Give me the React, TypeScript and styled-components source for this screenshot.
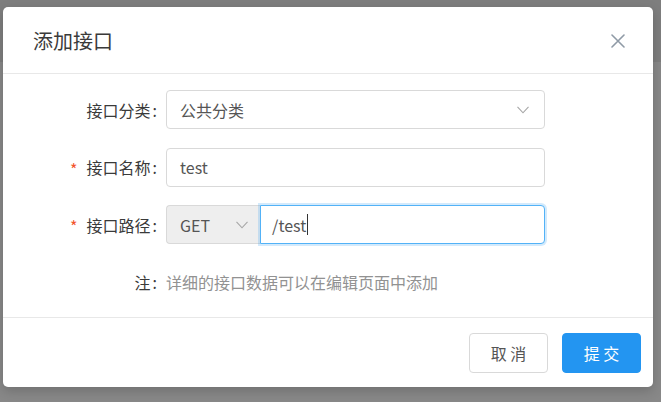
import React from 'react'
import styled, { createGlobalStyle } from 'styled-components'

const GlobalStyle = createGlobalStyle`
  html, body {
    margin: 0;
    padding: 0;
  }
  body {
    font-family: 'Noto Sans CJK SC', 'Noto Sans', sans-serif;
  }
`

const Backdrop = styled.div`
  width: 661px;
  height: 402px;
  box-sizing: border-box;
  padding: 7px 8px 0 3px;
  background: linear-gradient(to bottom, #7e7e7e 0, #7e7e7e 62px, #888888 62px);
  overflow: hidden;
`

const Modal = styled.div`
  width: 650px;
  height: 380px;
  background: #fff;
  border-radius: 5px;
  box-shadow: 0 4px 12px rgba(0, 0, 0, 0.18);
  display: flex;
  flex-direction: column;
`

const Header = styled.div`
  height: 66px;
  flex: none;
  display: flex;
  align-items: center;
  justify-content: space-between;
  padding: 0 28px 0 30px;
  border-bottom: 1px solid #e8e8e8;
`

const Title = styled.div`
  font-size: 20px;
  color: #3a3a3a;
  line-height: 1;
  padding-top: 2px;
`

const CloseButton = styled.div`
  width: 14px;
  height: 14px;
  display: flex;
  align-items: center;
  justify-content: center;
  margin-top: 2px;
`

const Body = styled.div`
  flex: 1;
  display: flex;
  flex-direction: column;
  gap: 18.5px;
  padding-top: 16px;
`

const FormRow = styled.div`
  display: grid;
  grid-template-columns: 163px 379px;
  height: 39px;
  align-items: center;
`

const Label = styled.label`
  display: flex;
  justify-content: flex-end;
  align-items: center;
  font-size: 16px;
  color: #3a3a3a;
  &::after {
    content: ':';
    margin: 0 9px 0 2px;
  }
`

const Required = styled.span`
  color: #f2532c;
  font-size: 16px;
  line-height: 1;
  margin-right: 9px;
  padding-top: 3px;
`

const Field = styled.div<{ $focused?: boolean; $addon?: boolean }>`
  box-sizing: border-box;
  height: 39px;
  display: flex;
  align-items: center;
  justify-content: space-between;
  padding: 0 15px 0 13px;
  border: 1px solid ${p => (p.$focused ? '#52b2f7' : '#d9d9d9')};
  border-radius: 4px;
  background: ${p => (p.$addon ? '#eeeeee' : '#fff')};
  box-shadow: ${p => (p.$focused ? '0 0 0 2px rgba(35, 149, 241, 0.2)' : 'none')};
  font-size: 16px;
  color: #555;
`

const InputGroup = styled.div`
  display: flex;
  height: 39px;
`

const MethodSelect = styled(Field)`
  width: 94px;
  flex: none;
  border-radius: 4px 0 0 4px;
  border-right: none;
  padding: 0 12px 0 13px;
`

const PathInput = styled(Field)`
  flex: 1;
  border-radius: 0 4px 4px 0;
  justify-content: flex-start;
  padding-left: 11px;
`

const Caret = styled.span`
  display: inline-block;
  width: 1px;
  height: 21px;
  background: #333;
  margin-left: 1px;
`

const Note = styled.span`
  font-size: 16px;
  color: #929292;
`

const Footer = styled.div`
  flex: none;
  height: 70px;
  box-sizing: border-box;
  display: flex;
  justify-content: flex-end;
  align-items: flex-start;
  gap: 14px;
  padding: 15px 12px 0 0;
  border-top: 1px solid #e8e8e8;
`

const Button = styled.button<{ $primary?: boolean }>`
  width: 79px;
  height: 40px;
  border-radius: 4px;
  font-family: 'Noto Sans CJK SC', sans-serif;
  font-size: 16px;
  cursor: pointer;
  border: 1px solid ${p => (p.$primary ? '#2395f1' : '#d9d9d9')};
  background: ${p => (p.$primary ? '#2395f1' : '#fff')};
  color: ${p => (p.$primary ? '#fff' : '#555')};
`

const Chevron = () => (
  <svg width='12' height='8' viewBox='0 0 12 8'>
    <path d='M0.5 0.8 L6 6.8 L11.5 0.8' fill='none' stroke='#a6a6a6' strokeWidth='1.1' />
  </svg>
)

const CloseIcon = () => (
  <svg width='14' height='14' viewBox='0 0 14 14'>
    <path d='M1 1 L13 13 M13 1 L1 13' stroke='#8f9aa6' strokeWidth='1.6' strokeLinecap='round' />
  </svg>
)

export default function App() {
  return (
    <>
      <GlobalStyle />
      <Backdrop>
        <Modal>
          <Header>
            <Title>添加接口</Title>
            <CloseButton>
              <CloseIcon />
            </CloseButton>
          </Header>
          <Body>
            <FormRow>
              <Label>接口分类</Label>
              <Field>
                <span>公共分类</span>
                <Chevron />
              </Field>
            </FormRow>
            <FormRow>
              <Label>
                <Required>*</Required>接口名称
              </Label>
              <Field>
                <span>test</span>
              </Field>
            </FormRow>
            <FormRow>
              <Label>
                <Required>*</Required>接口路径
              </Label>
              <InputGroup>
                <MethodSelect $addon>
                  <span>GET</span>
                  <Chevron />
                </MethodSelect>
                <PathInput $focused>
                  <span>/test</span>
                  <Caret />
                </PathInput>
              </InputGroup>
            </FormRow>
            <FormRow>
              <Label>注</Label>
              <Note>详细的接口数据可以在编辑页面中添加</Note>
            </FormRow>
          </Body>
          <Footer>
            <Button>取 消</Button>
            <Button $primary>提 交</Button>
          </Footer>
        </Modal>
      </Backdrop>
    </>
  )
}
